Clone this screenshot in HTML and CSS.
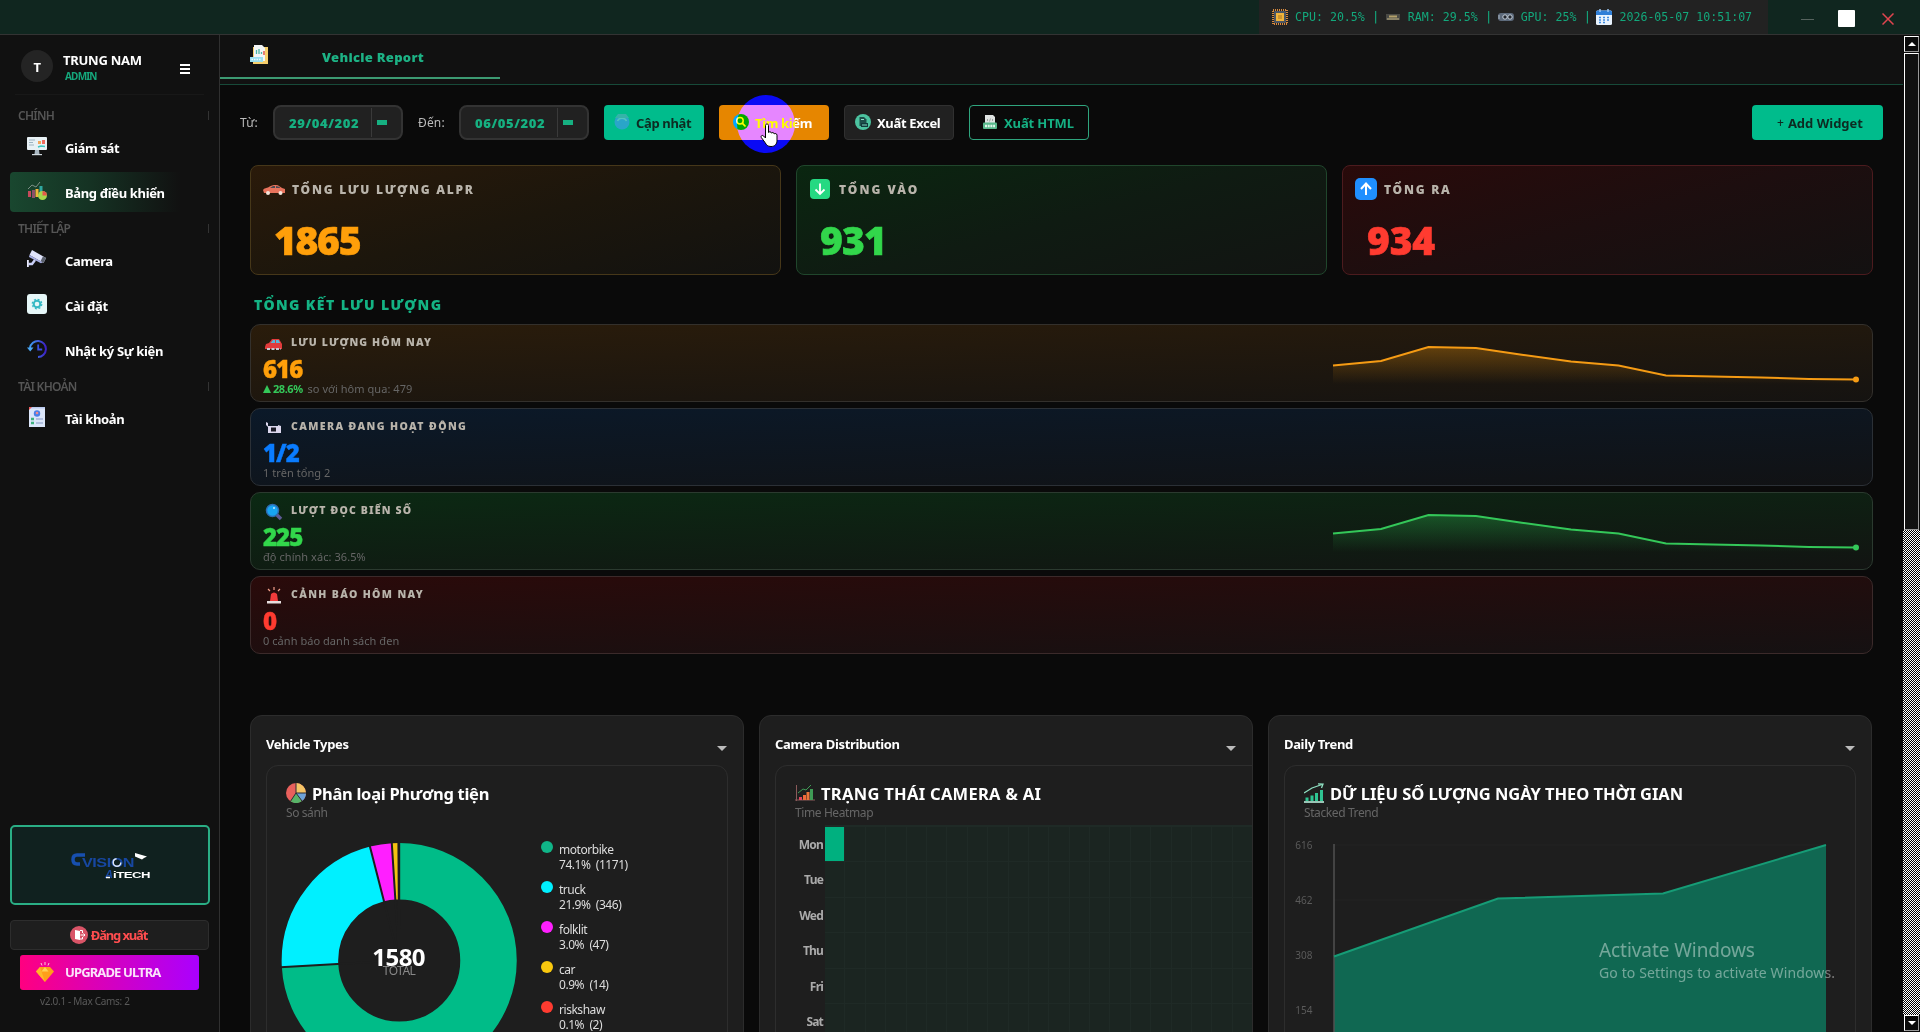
FILE: index.html
```
<!DOCTYPE html>
<html lang="vi">
<head>
  <meta charset="UTF-8">
  <meta name="viewport" content="width=device-width, initial-scale=1.0">
  <title>CVision AiTech - Bảng điều khiển</title>
  <link rel="stylesheet" href="styles.css">
</head>
<body>

  <!-- Title bar -->
  <header class="titlebar">
    <div class="stats">
      <svg width="16" height="16" viewBox="0 0 16 16"><rect x="1" y="1" width="14" height="14" fill="none" stroke="#d98a3d" stroke-width="2" stroke-dasharray="1 1"/><rect x="2" y="2" width="12" height="12" rx="1" fill="#4b5563"/><rect x="4" y="4" width="8" height="8" fill="#f0b43c"/><path d="M6 7h4M6 9h4" stroke="#a87420"/></svg>
      <span>CPU: 20.5%</span><i>|</i>
      <svg class="ram" width="14" height="8" viewBox="0 0 14 8"><path d="M0 1h14v6H0z" fill="#4a4a45"/><path d="M1 6h12" stroke="#c8b98a"/><path d="M3 2.5h8v2H3z" fill="#b3a06a"/></svg>
      <span>RAM: 29.5%</span><i>|</i>
      <svg width="16" height="8" viewBox="0 0 16 8"><rect width="16" height="8" rx="3" fill="#5d6a7b"/><circle cx="7" cy="4" r="2.2" fill="#22272e" stroke="#c9d3de"/><circle cx="12" cy="4" r="2.2" fill="#22272e" stroke="#c9d3de"/><path d="M1 2v4" stroke="#a7b3c0"/></svg>
      <span>GPU: 25%</span><i>|</i>
      <svg width="16" height="16" viewBox="0 0 16 16"><rect y="1.500" width="16" height="14.500" rx="1.500" fill="#e9f3fd"/><path d="M0 3a1.500 1.500 0 0 1 1.500-1.500h13A1.500 1.500 0 0 1 16 3v3H0z" fill="#2f7fd8"/><path d="M4 0v3M12 0v3" stroke="#9cc8f4" stroke-width="1.500"/><path d="M3 8.500h10M3 11h10M3 13.500h6" stroke="#3f8be0" stroke-width="1.600" stroke-dasharray="2 2"/></svg>
      <span>2026-05-07 10:51:07</span>
    </div>
    <div class="win-min"></div>
    <div class="win-max"></div>
    <svg class="win-close" width="12" height="12" viewBox="0 0 12 12"><path d="M.500.500l11 11M11.500.500l-11 11" stroke="#e0454f" stroke-width="1.500"/></svg>
  </header>

  <div class="layout">

    <!-- Sidebar -->
    <aside class="sidebar">
      <div class="profile">
        <div class="avatar">T</div>
        <div class="who">
          <div class="who-name">TRUNG NAM</div>
          <div class="who-role">ADMIN</div>
        </div>
        <div class="burger"></div>
      </div>

      <div class="nav-label">CHÍNH</div>
      <a class="nav-item">
        <svg width="20" height="20" viewBox="0 0 20 20"><rect y="1" width="20" height="13" rx="1" fill="#e8f1f5"/><path d="M2 4h6M2 6.500h4M2 9h5" stroke="#9db4c2"/><path d="M11 5h3v3h-3z" fill="#f2a65a"/><path d="M15 4h3v4h-3z" fill="#ef6b5e"/><path d="M11 11l3-1 4 .500" stroke="#3cc6c0" stroke-width="1.500" fill="none"/><path d="M8 14h4l.500 4h-5z" fill="#aab8c2"/><path d="M5 18h10v1.200H5z" fill="#cfd9df"/></svg>
        Giám sát
      </a>
      <a class="nav-item active">
        <svg width="20" height="20" viewBox="0 0 20 20"><path d="M1 8l4-4 4 2 4-5" stroke="#7c8f86" fill="none"/><path d="M1 10h3v6H1z" fill="#c7495b"/><path d="M5 9h3v8H5z" fill="#8a4f6a"/><path d="M8.500 8h3v8h-3z" fill="#f0b43c"/><path d="M12.500 5h3v8h-3z" fill="#2fa8a0"/><circle cx="15.500" cy="14.500" r="4.500" fill="#a5d64c"/><path d="M15.500 14.500V10a4.500 4.500 0 0 1 4.500 4.500z" fill="#e4574b"/></svg>
        Bảng điều khiển
      </a>

      <div class="nav-label">THIẾT LẬP</div>
      <a class="nav-item">
        <svg width="20" height="20" viewBox="0 0 20 20"><path d="M5 1l14 8-2.500 5L2.500 6z" fill="#dfe3fb"/><path d="M19 9l-2.500 5-3-1.700 2.500-5z" fill="#5b616e"/><path d="M2.500 6l13 7.300-1.500 1L2 8z" fill="#a9b0e6"/><path d="M8 11l-3 4H1.500" stroke="#c9cff7" stroke-width="2.500" fill="none"/><path d="M0 11h1.800v7H0z" fill="#e9ebff"/></svg>
        Camera
      </a>
      <a class="nav-item">
        <svg width="20" height="20" viewBox="0 0 20 20"><rect width="20" height="20" rx="3" fill="#e6f7f8"/><circle cx="10" cy="10" r="3.300" fill="none" stroke="#35b9c4" stroke-width="2"/><circle cx="10" cy="10" r="4.800" fill="none" stroke="#35b9c4" stroke-width="1.200" stroke-dasharray="2 1.770"/></svg>
        Cài đặt
      </a>
      <a class="nav-item">
        <svg width="20" height="20" viewBox="0 0 20 20"><defs><linearGradient id="hist"><stop stop-color="#3f9bf2"/><stop offset="1" stop-color="#3c1fc4"/></linearGradient></defs><path d="M3 9A8 8 0 1 1 11 18" fill="none" stroke="url(#hist)" stroke-width="2"/><path d="M0 8.500h6.500L3.200 12.500z" fill="#4aa8f5"/><path d="M11.200 5.500v5h4" fill="none" stroke="#3a4fe0" stroke-width="1.800"/></svg>
        Nhật ký Sự kiện
      </a>

      <div class="nav-label">TÀI KHOẢN</div>
      <a class="nav-item">
        <svg width="20" height="20" viewBox="0 0 20 20"><rect x="2" width="16" height="20" fill="#dce6fa"/><path d="M2 0h16v1.500H2z" fill="#b9c9ee"/><path d="M2 0h3L2 3z" fill="#ef5b5b"/><circle cx="10" cy="6.500" r="3.200" fill="#4b7fe8"/><circle cx="10" cy="6" r="1.300" fill="#f28a8a"/><path d="M4 12h3M4 16h3" stroke="#3fb27f" stroke-width="2.500"/><path d="M9 12h7M9 16h7" stroke="#a3b4d8" stroke-width="1.300"/></svg>
        Tài khoản
      </a>

      <div class="sidebar-foot">
        <div class="logo">
          <svg width="90" height="34" viewBox="0 0 90 34">
            <g font-family="Liberation Sans, sans-serif" font-weight="700">
              <path d="M17 5H9q-4 0-4 4.500t4 4.500h3" fill="none" stroke="#174fae" stroke-width="3.500"/>
              <text x="14" y="17" font-size="12" fill="#1747a0" textLength="52" lengthAdjust="spacingAndGlyphs">VISION</text>
              <text x="37" y="28" font-size="11" fill="#1747a0" font-style="italic">A</text>
              <text x="45" y="28" font-size="9.500" fill="#fff" textLength="37" lengthAdjust="spacingAndGlyphs">iTECH</text>
            </g>
            <circle cx="49" cy="12.500" r="3.800" fill="none" stroke="#dfe8f5" stroke-width="1.500" stroke-dasharray="17 7"/>
            <path d="M67 3l12 3.500-3 1.500-2 1.500-7-3z" fill="#fff"/>
            <path d="M38 27.500h4" stroke="#fff" stroke-width="1.500"/>
          </svg>
        </div>
        <button class="logout">
          <svg width="18" height="18" viewBox="0 0 18 18"><circle cx="9" cy="9" r="9" fill="#d95467"/><path d="M5 4l5 1v9l-5-1z" fill="#fff"/><path d="M10 4.500h2.500V7M10 13h2.500v-2" stroke="#fff" fill="none"/><path d="M10.500 9H15m-1.500-1.500L15 9l-1.500 1.500" stroke="#fff" fill="none"/></svg>
          Đăng xuất
        </button>
        <button class="upgrade">
          <svg width="18" height="20" viewBox="0 0 18 20"><path d="M9 0v3M5 1l1 2.500M13 1l-1 2.500" stroke="#f6c9d8"/><path d="M4 5h10l4 4.500L9 20 0 9.500z" fill="#ff9f1a"/><path d="M4 5l1.500 4.500L9 20 0 9.500z" fill="#ffb829"/><path d="M5.500 9.500L9 5l3.500 4.500z" fill="#ffd257"/></svg>
          UPGRADE ULTRA
        </button>
        <div class="version">v2.0.1 - Max Cams: 2</div>
      </div>
    </aside>

    <!-- Main -->
    <main class="main">
      <div class="tabs">
        <div class="tab">
          <svg width="18" height="19" viewBox="0 0 18 19"><path d="M3 2h15v17H3z" fill="#f6cf6c"/><path d="M4 0h8l3 3v13H4z" fill="#f3f5f6"/><path d="M6.500 9V5M9 9V4M11.500 9V7" stroke="#4bb6a5" stroke-width="1.300"/><path d="M14 6v4" stroke="#e0574b" stroke-width="1.500"/><path d="M0 12h13v5H0z" fill="#9adfee"/><path d="M1.500 14.500h10" stroke="#e8fbff" stroke-width="1.500" stroke-dasharray="1.500 1"/></svg>
          <span>Vehicle Report</span>
        </div>
      </div>

      <div class="toolbar">
        <label>Từ:</label>
        <div class="date"><span>29/04/202</span><b></b></div>
        <label class="to">Đến:</label>
        <div class="date"><span>06/05/202</span><b></b></div>
        <button class="btn btn-refresh">
          <svg width="16" height="17" viewBox="0 0 16 17"><circle cx="8" cy="9" r="7.500" fill="#2aa5c9"/><path d="M3.500 8a5 5 0 0 1 9 0" stroke="#4fc5c0" stroke-width="1.600" fill="none"/><path d="M1 5l3-4h8l3 4z" fill="#35b3a9"/></svg>
          Cập nhật
        </button>
        <div class="search-wrap">
          <button class="btn btn-search">
            <svg width="16" height="16" viewBox="0 0 16 16"><circle cx="8" cy="8" r="8" fill="#00a8ff"/><circle cx="7" cy="6.800" r="3.200" fill="none" stroke="#fff" stroke-width="1.500"/><path d="M9.500 9.300l3 3.200" stroke="#fff" stroke-width="1.700"/></svg>
            Tìm kiếm
          </button>
          <div class="click-ring"></div>
          <svg class="cursor" width="19" height="26" viewBox="0 0 19 26"><path d="M5.500 2.500c0-2 3-2 3 0v7c.300-1 2.800-1 3 .600.400-.900 2.600-.700 2.800.800.500-.700 2.700-.500 2.700 1.300v5c0 4-2 6.300-6 6.300-3.500 0-4.500-1.500-6-4L1.300 14.500c-.800-1.700 1-2.800 2.300-1.500l1.900 2z" fill="#fff" stroke="#000"/></svg>
        </div>
        <button class="btn btn-excel">
          <svg width="16" height="16" viewBox="0 0 16 16"><circle cx="8" cy="8" r="8" fill="#4cc3a0"/><path d="M4.500 3h4.500l2.500 2.500V12h-7z" fill="#1e4f4b"/><path d="M6 9h7v4H6z" fill="#123a3d"/><path d="M7 11h5" stroke="#7fd8c0"/><path d="M6 5.500h3" stroke="#8fe0c8"/></svg>
          Xuất Excel
        </button>
        <button class="btn btn-html">
          <svg width="14" height="14" viewBox="0 0 14 14"><path d="M2 0h8l2 2v6H2z" fill="#dfe3e2"/><path d="M5 4L4 5l1 1M9 4l1 1-1 1M7.500 3.500l-1 3" stroke="#8b9391" stroke-width=".800" fill="none"/><rect y="7.500" width="14" height="6.500" rx="1" fill="#58b98c"/><path d="M2 11h10" stroke="#dff5ea" stroke-width="2.500" stroke-dasharray="2 .700"/></svg>
          Xuất HTML
        </button>
        <button class="btn btn-add"><small>+</small> Add Widget</button>
      </div>

      <div class="cards">
        <div class="card orange">
          <div class="card-head">
            <svg width="22" height="22" viewBox="0 0 22 22"><path d="M0 12c1-2 4-2 5-2.500C8 7.500 10 7 13 7c3 0 4 2 6 3l3 1v4H1z" fill="#e8735c"/><path d="M7 10l3-2h2v2zM13 8l3 .700 1.500 1.300H13z" fill="#4b4a52"/><circle cx="5" cy="15" r="2" fill="#f3e4da"/><circle cx="17.500" cy="15" r="2" fill="#f3e4da"/></svg>
            TỔNG LƯU LƯỢNG ALPR
          </div>
          <div class="card-value">1865</div>
        </div>
        <div class="card green">
          <div class="card-head">
            <svg width="20" height="20" viewBox="0 0 20 20"><rect width="20" height="20" rx="4" fill="#25d982"/><path d="M10 4.500v10M5.500 10.500l4.500 4.500 4.500-4.500" stroke="#fff" stroke-width="1.800" fill="none"/></svg>
            TỔNG VÀO
          </div>
          <div class="card-value">931</div>
        </div>
        <div class="card red">
          <div class="card-head">
            <svg width="22" height="22" viewBox="0 0 22 22"><rect width="22" height="22" rx="5" fill="#1f8fff"/><path d="M11 17V6M6 11l5-5.500L16 11" stroke="#fff" stroke-width="2" fill="none"/></svg>
            TỔNG RA
          </div>
          <div class="card-value">934</div>
        </div>
      </div>

      <h2 class="section-title">TỔNG KẾT LƯU LƯỢNG</h2>

      <div class="rows">
        <div class="row orange">
          <div>
            <div class="row-head">
              <svg width="18" height="18" viewBox="0 0 18 18"><path d="M0 12l1-3 3-1 3-4h7l3 5v5H0z" fill="#e23b3b"/><path d="M5.500 8L8 5h2v3zM11 5h2.500l1.700 3H11z" fill="#59b7d8"/><path d="M2 14h14" stroke="#c9c9d2" stroke-width="2" stroke-dasharray="3 1.500"/></svg>
              LƯU LƯỢNG HÔM NAY
            </div>
            <div class="row-value">616</div>
            <div class="row-sub"><i class="up"></i><b>28.6%</b> so với hôm qua: 479</div>
          </div>
          <svg class="spark" width="530" height="62" viewBox="0 0 530 62">
            <defs><linearGradient id="so" x1="0" y1="0" x2="0" y2="1"><stop stop-color="#ff9f0a" stop-opacity=".3"/><stop offset="1" stop-color="#ff9f0a" stop-opacity="0"/></linearGradient></defs>
            <path d="M3 33.500L51 29 98.500 15 146 16 193.500 23 241 29.500 288.500 33.500 336 43.500 383 44.500 431 45.500 479 47 526 47.500V52H3z" fill="url(#so)"/>
            <path d="M3 33.500L51 29 98.500 15 146 16 193.500 23 241 29.500 288.500 33.500 336 43.500 383 44.500 431 45.500 479 47 526 47.500" fill="none" stroke="#f59b14" stroke-width="2"/>
            <circle cx="526" cy="47.500" r="3" fill="#f59b14"/>
          </svg>
        </div>
        <div class="row blue">
          <div>
            <div class="row-head">
              <svg width="18" height="18" viewBox="0 0 18 18"><path d="M1 3l2 1v3h10v-1l3 1v7H3V8L1 6z" fill="#dcd8ee"/><rect x="6" y="8.500" width="5" height="4" fill="#1b1b26"/></svg>
              CAMERA ĐANG HOẠT ĐỘNG
            </div>
            <div class="row-value">1/2</div>
            <div class="row-sub">1 trên tổng 2</div>
          </div>
        </div>
        <div class="row green">
          <div>
            <div class="row-head">
              <svg width="18" height="18" viewBox="0 0 18 18"><path d="M11 11l5 5" stroke="#5d5a94" stroke-width="3.500"/><circle cx="7.500" cy="7.500" r="6" fill="#17a5f2" stroke="#2f6bb0" stroke-width="1.500"/><circle cx="9" cy="5" r="1" fill="#bfe9ff"/></svg>
              LƯỢT ĐỌC BIỂN SỐ
            </div>
            <div class="row-value">225</div>
            <div class="row-sub">độ chính xác: 36.5%</div>
          </div>
          <svg class="spark" width="530" height="62" viewBox="0 0 530 62">
            <defs><linearGradient id="sg" x1="0" y1="0" x2="0" y2="1"><stop stop-color="#30d158" stop-opacity=".3"/><stop offset="1" stop-color="#30d158" stop-opacity="0"/></linearGradient></defs>
            <path d="M3 33.500L51 29 98.500 15 146 16 193.500 23 241 29.500 288.500 33.500 336 43.500 383 44.500 431 45.500 479 47 526 47.500V52H3z" fill="url(#sg)"/>
            <path d="M3 33.500L51 29 98.500 15 146 16 193.500 23 241 29.500 288.500 33.500 336 43.500 383 44.500 431 45.500 479 47 526 47.500" fill="none" stroke="#34c759" stroke-width="2"/>
            <circle cx="526" cy="47.500" r="3" fill="#34c759"/>
          </svg>
        </div>
        <div class="row red">
          <div>
            <div class="row-head">
              <svg width="18" height="18" viewBox="0 0 18 18"><path d="M9 0v3M3 2l2 2M15 2l-2 2" stroke="#f2a08a" stroke-width="1.200"/><path d="M5 14l1-7q3-3 6 0l1 7z" fill="#f23b3b"/><path d="M2 14h14v2.500H2z" fill="#e6dede"/></svg>
              CẢNH BÁO HÔM NAY
            </div>
            <div class="row-value">0</div>
            <div class="row-sub">0 cảnh báo danh sách đen</div>
          </div>
        </div>
      </div>

      <div class="widgets">
        <section class="widget">
          <div class="widget-head">Vehicle Types <i></i></div>
          <div class="panel">
            <h3>
              <svg width="20" height="20" viewBox="0 0 20 20"><circle cx="10" cy="10" r="10" fill="#e8605c"/><path d="M10 10V0a10 10 0 0 1 10 10z" fill="#f5c566"/><path d="M10 10h10a10 10 0 0 1-4 8z" fill="#6ea3d8"/><path d="M10 10l6 8a10 10 0 0 1-11.500.300z" fill="#58b368"/><path d="M10 0v10h10M10 10l6 8M10 10l-5.500 8.300" stroke="#2b2b35" fill="none"/></svg>
              Phân loại Phương tiện
            </h3>
            <p class="panel-sub">So sánh</p>
            <div class="donut-wrap">
              <svg width="274" height="272" viewBox="0 0 274 272">
                <g fill="none" stroke-width="56.500" transform="rotate(-90 132.200 135.500)">
                  <circle cx="132.200" cy="135.500" r="89.300" stroke="#00bc88" pathLength="100" stroke-dasharray="74.100 25.900"/>
                  <circle cx="132.200" cy="135.500" r="89.300" stroke="#00f0ff" pathLength="100" stroke-dasharray="21.900 78.100" stroke-dashoffset="-74.100"/>
                  <circle cx="132.200" cy="135.500" r="89.300" stroke="#ff1fff" pathLength="100" stroke-dasharray="3 97" stroke-dashoffset="-96"/>
                  <circle cx="132.200" cy="135.500" r="89.300" stroke="#f5c211" pathLength="100" stroke-dasharray=".900 99.100" stroke-dashoffset="-99"/>
                </g>
                <path d="M132.200 135.500l-118.800 6.700M132.200 135.500L102.600 20.200M132.200 135.500L124.700 16.700M132.200 135.500L131.400 16M132.200 135.500V16" stroke="#1e1e1e" stroke-width="2"/>
                <text x="132" y="149.500" class="donut-sub">TOTAL</text>
                <text x="131.700" y="141" class="donut-num">1580</text>
              </svg>
              <ul class="legend">
                <li><i class="c1"></i><span>motorbike<br>74.1%&nbsp; (1171)</span></li>
                <li><i class="c2"></i><span>truck<br>21.9%&nbsp; (346)</span></li>
                <li><i class="c3"></i><span>folklit<br>3.0%&nbsp; (47)</span></li>
                <li><i class="c4"></i><span>car<br>0.9%&nbsp; (14)</span></li>
                <li><i class="c5"></i><span>riskshaw<br>0.1%&nbsp; (2)</span></li>
              </ul>
            </div>
          </div>
        </section>

        <section class="widget">
          <div class="widget-head">Camera Distribution <i></i></div>
          <div class="panel panel-wide">
            <h3>
              <svg width="20" height="20" viewBox="0 0 20 20"><path d="M1.500 2v16M0 17h20" stroke="#8a5a5a" fill="none"/><path d="M4 14h3v3H4z" fill="#e0455f"/><path d="M8 12h3v5H8z" fill="#ef6b3a"/><path d="M11.500 9h3v8h-3z" fill="#e9743a"/><path d="M15 6h3v11h-3z" fill="#3f9a55"/><path d="M3 10l5-4 3 1 5-5" stroke="#3f9a55" fill="none"/></svg>
              TRẠNG THÁI CAMERA &amp; AI
            </h3>
            <p class="panel-sub">Time Heatmap</p>
            <div id="heatmap" class="heatmap"></div>
          </div>
        </section>

        <section class="widget">
          <div class="widget-head">Daily Trend <i></i></div>
          <div class="panel">
            <h3>
              <svg width="20" height="20" viewBox="0 0 20 20"><path d="M0 19h20" stroke="#b9efdc" stroke-width="1.600"/><path d="M1.500 14.500h3V18h-3zM6.500 12.500h3V18h-3zM11 10h3v8h-3zM16 7h3v11h-3z" fill="#2fc492"/><path d="M0 10l8-5 10-3.500M14 .800l5 .200-1.500 4" stroke="#8fe0c2" stroke-width="1.300" fill="none"/></svg>
              DỮ LIỆU SỐ LƯỢNG NGÀY THEO THỜI GIAN
            </h3>
            <p class="panel-sub">Stacked Trend</p>
            <svg class="trend" width="570" height="262" viewBox="0 0 570 262">
              <path d="M49 20h492M49 75h492" stroke="#222"/>
              <path d="M49 131.500L213 73.500 378 68.500 541 20V262H49z" fill="#106852"/>
              <path d="M49 19v243" stroke="#505050" stroke-width="1.500"/>
              <path d="M49 131.500L213 73.500 378 68.500 541 20" fill="none" stroke="#169c76" stroke-width="2"/>
              <text x="27.500" y="24">616</text>
              <text x="27.500" y="79">462</text>
              <text x="27.500" y="134">308</text>
              <text x="27.500" y="189">154</text>
            </svg>
          </div>
        </section>
      </div>
    </main>

    <div class="scrollbar">
      <div class="sb-btn"><i class="sb-up"></i></div>
      <div class="sb-thumb"></div>
      <div class="sb-track"></div>
      <div class="sb-btn"><i class="sb-down"></i></div>
    </div>
  </div>

  <div class="watermark">
    <div class="wm-title">Activate Windows</div>
    <div class="wm-text">Go to Settings to activate Windows.</div>
  </div>

  <script>
    // Heatmap: days x 24 hours
    const days = ["Mon", "Tue", "Wed", "Thu", "Fri", "Sat"];
    const heatmap = document.getElementById("heatmap");
    days.forEach((day, d) => {
      let html = `<span>${day}</span>`;
      for (let h = 0; h < 24; h++) {
        html += `<i class="${d === 0 && h === 0 ? 'hot' : ''}"></i>`;
      }
      heatmap.innerHTML += html;
    });
  </script>

</body>
</html>
```
FILE: styles.css
```
* {
  box-sizing: border-box;
}

body {
  font-family: "Noto Sans", "Open Sans", sans-serif;
  font-size: 13px;
  letter-spacing: -0.35px;
  background: #0a0a0a;
  color: #fff;
  margin: 0;
  width: 1920px;
  height: 1032px;
  overflow: hidden;
  display: flex;
  flex-direction: column;
}

svg {
  display: block;
  flex: none;
}

button {
  font: inherit;
  letter-spacing: inherit;
  color: inherit;
  border: none;
  padding: 0;
}

/* title bar */
.titlebar {
  height: 35px;
  flex: none;
  background: #10261f;
  border-bottom: 1px solid #333;
  display: flex;
  align-items: center;
  justify-content: flex-end;
  padding-right: 26px;
}

.stats {
  width: 509px;
  height: 34px;
  background: #222;
  display: flex;
  align-items: center;
  padding-left: 13px;
  gap: 7px;
  font-family: "DejaVu Sans Mono", monospace;
  font-size: 11.6px;
  letter-spacing: 0;
  color: #13a87c;
  white-space: nowrap;
}

.stats i {
  font-style: normal;
  font-size: 13px;
  width: 6px;
  margin-top: -1px;
}

.ram {
  margin: 0 1px;
}

.win-min {
  width: 13px;
  height: 1px;
  background: #56635e;
  margin: 4px 24px 0 33px;
}

.win-max {
  width: 17px;
  height: 17px;
  border-radius: 1px;
  background: #fff;
  margin: 3px 27px 0 0;
}

.win-close {
  margin-top: 4px;
}

.layout {
  flex: 1;
  min-height: 0;
  display: flex;
}

/* sidebar */
.sidebar {
  width: 220px;
  background: #111;
  border-right: 1px solid #303030;
  padding: 0 9px 0 10px;
  display: flex;
  flex-direction: column;
}

.profile {
  height: 60px;
  margin: 0 6px 9px 5px;
  padding: 3px 4px 0 6px;
  border-bottom: 1px solid #181818;
  display: flex;
  align-items: center;
}

.avatar {
  width: 32px;
  height: 32px;
  border-radius: 50%;
  background: #242424;
  text-align: center;
  line-height: 35px;
  font-weight: 700;
}

.who {
  margin: 2px 0 0 10px;
  flex: 1;
}

.who-name {
  font-weight: 700;
  line-height: 18px;
  letter-spacing: -0.26px;
}

.who-role {
  font-size: 10px;
  font-weight: 700;
  line-height: 14px;
  letter-spacing: -0.8px;
  color: #15a87c;
  margin-left: 2px;
}

.burger {
  width: 10px;
  height: 10px;
  margin: 6px 10px 0 0;
  border-top: 2px solid #fff;
  border-bottom: 2px solid #fff;
  background: linear-gradient(transparent 2px, #fff 2px, #fff 4px, transparent 4px);
}

.nav-label {
  height: 23px;
  line-height: 24px;
  padding-left: 8px;
  font-size: 12px;
  font-weight: 600;
  letter-spacing: -0.75px;
  color: #555;
  background: linear-gradient(#333, #333) 198px 7px / 1px 9px no-repeat;
}

.nav-item {
  height: 40px;
  margin-bottom: 5px;
  padding: 2px 0 0 17px;
  display: flex;
  align-items: center;
  gap: 18px;
  font-weight: 700;
  letter-spacing: -0.35px;
  line-height: 20px;
}

.nav-item svg {
  margin-top: -5px;
}

.nav-item.active {
  border-radius: 4px 0 0 4px;
  background: linear-gradient(90deg, #19472f, #153223 40%, #111 85%);
}

.sidebar-foot {
  margin-top: auto;
}

.logo {
  height: 80px;
  border: 2px solid #2aae85;
  border-radius: 5px;
  background: #10211f;
  padding: 23px 0 0 56px;
}

.logout {
  width: 199px;
  height: 30px;
  margin-top: 15px;
  border: 1px solid #2d2d2d;
  border-radius: 4px;
  background: #1e1e1e;
  color: #ff4d4f;
  font-weight: 700;
  letter-spacing: -1.15px;
  display: flex;
  align-items: center;
  justify-content: center;
  gap: 3px;
  padding-right: 2px;
}

.upgrade {
  width: 179px;
  height: 35px;
  margin: 5px 10px 0;
  padding: 0 0 2px 16px;
  border-radius: 3px;
  background: linear-gradient(90deg, #ff0080, #aa00ff);
  color: #fbe3fb;
  font-weight: 700;
  letter-spacing: -0.88px;
  display: flex;
  align-items: center;
  gap: 11px;
}

.version {
  font-size: 10px;
  line-height: 14px;
  color: #5a5a5a;
  letter-spacing: -0.3px;
  margin: 4px 0 24px 30px;
}

/* main */
.main {
  flex: 1;
  min-width: 0;
  display: flex;
  flex-direction: column;
  overflow: hidden;
}

.tabs {
  height: 50px;
  flex: none;
  background: #111;
  border-bottom: 1px solid #174a39;
}

.tab {
  width: 280px;
  height: 44px;
  border-bottom: 2px solid #3c9a72;
  display: flex;
  align-items: center;
  padding-left: 30px;
  font-weight: 900;
  letter-spacing: 0.3px;
  color: #1db285;
}

.tab svg {
  margin-top: -3px;
}

.tab span {
  margin: 2px 0 0 54px;
}

.toolbar {
  display: flex;
  align-items: center;
  gap: 15px;
  height: 35px;
  flex: none;
  margin: 20px 20px 25px;
}

.toolbar label {
  width: 18px;
  font-size: 12px;
  letter-spacing: 0.15px;
  color: #bbb;
}

.toolbar .to {
  width: 26px;
}

.date {
  width: 130px;
  height: 35px;
  border: 2px solid #333;
  border-radius: 8px;
  background: #212121;
  display: flex;
  align-items: center;
  padding-left: 14px;
  font-weight: 900;
  letter-spacing: 0.6px;
  color: #16b081;
}

.date span {
  width: 82px;
}

.date b {
  width: 24px;
  height: 29px;
  border-left: 1px solid #3a3a3a;
  background: linear-gradient(#16b081, #16b081) 5px 12px / 10px 5px no-repeat;
}

.btn {
  height: 35px;
  border-radius: 4px;
  display: flex;
  align-items: center;
  gap: 6px;
  font-weight: 700;
  white-space: nowrap;
}

.btn svg {
  margin-top: -2px;
}

.btn-refresh {
  width: 100px;
  padding-left: 10px;
  background: #00bc8c;
  color: #0d2b22;
}

.btn-search {
  width: 110px;
  padding-left: 14px;
  background: #e68600;
}

.btn-excel {
  width: 110px;
  padding-left: 10px;
  background: #212121;
  border: 1px solid #303030;
}

.btn-html {
  width: 120px;
  padding-left: 13px;
  gap: 7px;
  background: transparent;
  border: 1px solid #2fa57e;
  color: #15b083;
  letter-spacing: -0.12px;
}

.btn-add {
  width: 131px;
  margin-left: auto;
  padding-left: 25px;
  gap: 4px;
  background: #00bc8c;
  color: #0d2b22;
  letter-spacing: 0;
}

.btn-add small {
  font-size: 12px;
  font-weight: 500;
}

.search-wrap {
  position: relative;
}

/* mouse highlight over the search button */
.click-ring {
  position: absolute;
  left: 18px;
  top: -10px;
  width: 58px;
  height: 58px;
  border-radius: 50%;
  background: #00f;
  mix-blend-mode: difference;
}

.cursor {
  position: absolute;
  left: 41px;
  top: 18px;
}

.cards {
  display: grid;
  grid-template-columns: repeat(3, 1fr);
  gap: 15px;
  margin: 0 30px;
}

.card {
  height: 110px;
  border: 1px solid;
  border-radius: 8px;
  padding: 11px 12px;
}

.card-head {
  height: 24px;
  display: flex;
  align-items: center;
  gap: 7px;
  font-size: 12px;
  font-weight: 900;
  letter-spacing: 1.75px;
  color: #b9b4ab;
}

.green .card-head {
  gap: 9px;
  padding-left: 1px;
  letter-spacing: 2px;
}

.card-value {
  margin: 19px 0 0 11px;
  font-size: 39px;
  line-height: 40px;
  font-weight: 900;
  letter-spacing: -1.3px;
  -webkit-text-stroke: 0.6px;
}

.green .card-value {
  letter-spacing: -0.9px;
}

.red .card-value {
  margin-left: 12px;
  letter-spacing: -0.2px;
}

.card.orange {
  background: linear-gradient(165deg, #2a1a0a, #1c160c 50%, #121210);
  border-color: #463719;
}

.card.green {
  background: linear-gradient(165deg, #0a2610, #0f1b12 50%, #121412);
  border-color: #20462c;
}

.card.red {
  background: linear-gradient(165deg, #290a0a, #1d0e0f 50%, #131111);
  border-color: #4c1b1e;
}

.orange .card-value,
.orange .row-value {
  color: #ff9f0a;
}

.green .card-value,
.green .row-value {
  color: #32d74b;
}

.red .card-value,
.red .row-value {
  color: #ff3b30;
}

.blue .row-value {
  color: #0a7cff;
}

.section-title {
  margin: 20px 0 9px 34px;
  font-size: 14px;
  line-height: 20px;
  font-weight: 900;
  letter-spacing: 1.4px;
  color: #14b384;
}

.rows {
  margin: 0 30px;
  display: flex;
  flex-direction: column;
  gap: 6px;
}

.row {
  height: 78px;
  border: 1px solid #33302c;
  border-radius: 10px;
  padding: 8px 12px 0;
  display: flex;
  justify-content: space-between;
}

.row.orange {
  background: linear-gradient(178deg, #2a1c0b, #151311);
}

.row.blue {
  background: linear-gradient(178deg, #0b1929, #111214);
  border-color: #2b3036;
}

.row.green {
  background: linear-gradient(178deg, #0b2913, #121412);
  border-color: #2b3a2f;
}

.row.red {
  background: linear-gradient(178deg, #2a0a0a, #151112);
  border-color: #3b2a2a;
}

.row-head {
  height: 18px;
  display: flex;
  align-items: center;
  gap: 8px;
  margin-left: 2px;
  font-size: 10.5px;
  font-weight: 900;
  letter-spacing: 1.15px;
  color: #b9b4ab;
}

.blue .row-head {
  letter-spacing: 1.4px;
}

.red .row-head {
  letter-spacing: 1.35px;
}

.row-head svg {
  margin-top: 3px;
}

.row-value {
  margin-top: 6px;
  font-size: 24px;
  line-height: 24px;
  font-weight: 900;
  letter-spacing: -1px;
  -webkit-text-stroke: 0.4px;
}

.row-sub {
  margin-top: 1px;
  font-size: 11px;
  line-height: 14px;
  letter-spacing: 0.05px;
  color: #666;
}

.row-sub b {
  color: #34c759;
  letter-spacing: -0.45px;
  margin-right: 2px;
}

.up {
  display: inline-block;
  border: 4.5px solid transparent;
  border-top: 0;
  border-bottom: 8px solid #34c759;
  margin-right: 2px;
}

.spark {
  margin-top: -1px;
}

/* widgets */
.widgets {
  margin: 61px 31px 0 30px;
  display: grid;
  grid-template-columns: 494px 494px 1fr;
  gap: 15px;
}

.widget {
  height: 560px;
  border: 1px solid #2c2c2c;
  border-radius: 12px;
  background: #1e1e1e;
  padding: 0 15px;
  overflow: hidden;
}

.widget-head {
  height: 49px;
  padding-top: 7px;
  display: flex;
  align-items: center;
  justify-content: space-between;
  font-weight: 700;
}

.widget-head i {
  border: 5px solid transparent;
  border-top-color: #bbb;
  border-bottom: 0;
  margin: 8px 1px 0 0;
}

.panel {
  height: 500px;
  border: 1px solid #2d2d2d;
  border-radius: 12px;
}

.panel-wide {
  width: 560px;
}

.panel h3 {
  margin: 16px 0 0 19px;
  display: flex;
  align-items: center;
  gap: 6px;
  font-size: 16.5px;
  line-height: 24px;
  font-weight: 700;
  letter-spacing: -0.28px;
}

.panel h3 svg {
  margin-top: -2px;
}

.panel-wide h3 {
  letter-spacing: 0.3px;
}

.widget:last-child h3 {
  letter-spacing: -0.05px;
}

.panel-sub {
  margin: 0 0 5px 19px;
  font-size: 12px;
  line-height: 14px;
  letter-spacing: -0.4px;
  color: #666;
}

.donut-wrap {
  display: flex;
}

.donut-num,
.donut-sub {
  text-anchor: middle;
  font-size: 12px;
  letter-spacing: -0.56px;
  fill: #888;
}

.donut-num {
  font-size: 24px;
  font-weight: 700;
  fill: #fff;
}

.legend {
  list-style: none;
  margin: 0;
  padding: 19px 0 0;
}

.legend li {
  display: flex;
  gap: 6px;
  height: 40px;
  font-size: 12px;
  line-height: 15px;
  letter-spacing: -0.46px;
  color: #ddd;
}

.legend span {
  margin-top: -2px;
}

.legend i {
  width: 12px;
  height: 12px;
  margin-top: -3px;
  border-radius: 50%;
}

.c1 { background: #10b588; }
.c2 { background: #00f0ff; }
.c3 { background: #ff1fff; }
.c4 { background: #f9c80e; }
.c5 { background: #ff3b30; }

.heatmap {
  display: grid;
  grid-template-columns: 48px repeat(24, 19.4px);
  grid-auto-rows: 34.4px;
  gap: 1px;
  padding-top: 2px;
  background: linear-gradient(#1f2a26, #1f2a26) 49px 0 no-repeat;
}

.heatmap span {
  text-align: right;
  padding-right: 1px;
  font-size: 12px;
  line-height: 35px;
  font-weight: 700;
  letter-spacing: -0.8px;
  color: #aaa;
}

.heatmap i {
  background: #1b2521;
}

.heatmap .hot {
  background: #00b07f;
}

.trend text {
  text-anchor: end;
  font-size: 10px;
  letter-spacing: 0;
  fill: #5a5a5a;
}

/* scrollbar */
.scrollbar {
  width: 17px;
  display: flex;
  flex-direction: column;
  padding: 1px 0;
}

.sb-btn {
  width: 15px;
  height: 16px;
  margin-left: 1px;
  border: 1px solid #fff;
  border-right-color: #999;
  border-bottom-color: #999;
  display: flex;
  align-items: center;
  justify-content: center;
}

.sb-up,
.sb-down {
  border: 4px solid transparent;
}

.sb-up {
  border-top: 0;
  border-bottom-color: #fff;
}

.sb-down {
  border-bottom: 0;
  border-top-color: #fff;
}

.sb-thumb {
  width: 15px;
  height: 477px;
  margin: 1px 0 0 1px;
  background: #111;
  border: 1px solid #fff;
  border-right-color: #999;
  border-bottom-color: #999;
}

.sb-track {
  flex: 1;
  background: repeating-conic-gradient(#fff 0 25%, #000 0 50%) 0 0 / 2px 2px;
}

.watermark {
  position: absolute;
  left: 1599px;
  top: 938px;
  color: rgba(255, 255, 255, 0.42);
  white-space: nowrap;
}

.wm-title {
  font-size: 19px;
  line-height: 24px;
  letter-spacing: -0.07px;
}

.wm-text {
  margin-top: 1px;
  font-size: 14px;
  line-height: 20px;
  letter-spacing: 0.12px;
}
```
